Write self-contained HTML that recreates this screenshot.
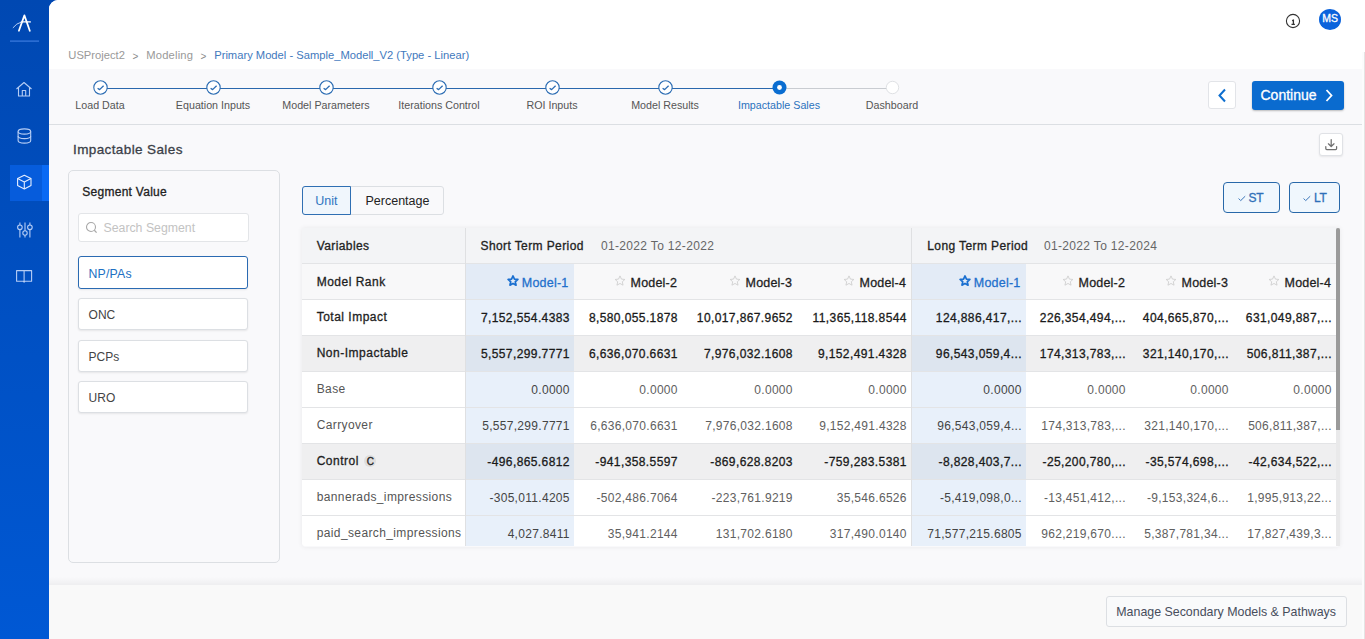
<!DOCTYPE html>
<html><head><meta charset="utf-8"><style>
*{box-sizing:border-box;margin:0;padding:0}
html,body{width:1365px;height:639px;overflow:hidden;background:linear-gradient(to bottom,#0048b2,#0058d4);font-family:"Liberation Sans",sans-serif;color:#222}
.abs{position:absolute}
.t{position:absolute;white-space:nowrap;line-height:1}
.m{-webkit-text-stroke:0.3px currentColor}
</style></head><body>
<svg width="49" height="639" viewBox="0 0 49 639" class="abs" style="left:0;top:0">
<g fill="none" stroke="#fff" stroke-linecap="round">
<path d="M18.9 30.8 L24.4 15.4 L29.8 30.8" stroke-width="1.75" stroke-linejoin="round"/>
<path d="M21.2 21.9 H30.4" stroke-width="1.2"/>
<path d="M13.1 27.6 Q16.3 23.3 21.5 22" stroke-width="0.85" stroke="#d5e4ff"/>
</g>
<rect x="10" y="40.5" width="29" height="1.2" fill="#3c7ddf"/>
<g fill="none" stroke="#b5cdf5" stroke-width="1.1" stroke-linejoin="round">
<path d="M16.5 89 L24 82.5 L31.5 89 M18.5 87.5 V96 H29.5 V87.5"/>
<path d="M22.3 96 V90.5 H25.7 V96"/>
</g>
<g fill="none" stroke="#b5cdf5" stroke-width="1.1">
<ellipse cx="24.4" cy="131.5" rx="6.3" ry="2.6"/>
<path d="M18.1 131.5 V140.5 A6.3 2.6 0 0 0 30.7 140.5 V131.5"/>
<path d="M18.1 136 A6.3 2.6 0 0 0 30.7 136"/>
</g>
<rect x="10" y="165" width="32" height="36" fill="#065cdc"/>
<rect x="42" y="165" width="7" height="36" fill="#0a6af4"/>
<g fill="none" stroke="#e6eeff" stroke-width="1.1" stroke-linejoin="round">
<path d="M24.3 175.2 L31 178.6 V185.6 L24.3 189 L17.6 185.6 V178.6 Z"/>
<path d="M17.6 178.6 L24.3 182 L31 178.6 M24.3 182 V189"/>
</g>
<g fill="none" stroke="#b5cdf5" stroke-width="1.1">
<path d="M19.9 222.6 V237.6 M25 222.6 V237.6 M29.9 222.6 V237.6"/>
<circle cx="19.9" cy="227.3" r="2.3" fill="#004ebe"/>
<circle cx="25" cy="233" r="2.2" fill="#004ebe"/>
<circle cx="29.9" cy="227.3" r="2.3" fill="#004ebe"/>
</g>
<g fill="none" stroke="#b5cdf5" stroke-width="1.1" stroke-linejoin="round">
<path d="M16.6 270.6 H31.6 V281.2 H25.2 L24.1 282.2 L23 281.2 H16.6 Z M24.1 270.6 V281.5"/>
</g>
</svg>
<div class="abs" style="left:49px;top:0px;width:1316px;height:639px;background:#f9f9fb;border-top-left-radius:9px;overflow:hidden"></div>
<div class="abs" style="left:49px;top:0px;width:1316px;height:69px;background:#fff;border-top-left-radius:9px"></div>
<div class="abs" style="left:49px;top:69px;width:1316px;height:56px;background:#f9f9fb;border-bottom:1px solid #dcdfe3"></div>
<div class="t" style="left:68.30px;top:49.88px;font-size:11.2px;color:#999;letter-spacing:0px;">USProject2</div>
<div class="t" style="left:132.60px;top:51.88px;font-size:10px;color:#8a8a8a;letter-spacing:0px;">&gt;</div>
<div class="t" style="left:146.20px;top:49.88px;font-size:11.2px;color:#999;letter-spacing:0.2px;">Modeling</div>
<div class="t" style="left:200.50px;top:51.88px;font-size:10px;color:#8a8a8a;letter-spacing:0px;">&gt;</div>
<div class="t" style="left:214.20px;top:49.88px;font-size:11.2px;color:#4279bd;letter-spacing:0px;">Primary Model - Sample_Modell_V2 (Type - Linear)</div>
<div class="abs" style="left:100px;top:88px;width:679px;height:1.2px;background:#2a68ad"></div>
<div class="abs" style="left:779px;top:88px;width:113px;height:1.3px;background:#c9ccd1"></div>
<svg class="abs" style="left:92.5px;top:80px" width="15" height="15" viewBox="0 0 15 15"><circle cx="7.5" cy="7.5" r="6.7" fill="#fff" stroke="#2b6cb3" stroke-width="1.1"/><path d="M4.6 8.2 L6.6 9.6 L10.6 5.8" fill="none" stroke="#2b6cb3" stroke-width="1.3" stroke-linejoin="round"/></svg>
<div class="t" style="left:0.00px;width:200px;text-align:center;top:99.98px;font-size:10.7px;color:#555;letter-spacing:0px">Load Data</div>
<svg class="abs" style="left:205.5px;top:80px" width="15" height="15" viewBox="0 0 15 15"><circle cx="7.5" cy="7.5" r="6.7" fill="#fff" stroke="#2b6cb3" stroke-width="1.1"/><path d="M4.6 8.2 L6.6 9.6 L10.6 5.8" fill="none" stroke="#2b6cb3" stroke-width="1.3" stroke-linejoin="round"/></svg>
<div class="t" style="left:113.00px;width:200px;text-align:center;top:99.98px;font-size:10.7px;color:#555;letter-spacing:0px">Equation Inputs</div>
<svg class="abs" style="left:318.5px;top:80px" width="15" height="15" viewBox="0 0 15 15"><circle cx="7.5" cy="7.5" r="6.7" fill="#fff" stroke="#2b6cb3" stroke-width="1.1"/><path d="M4.6 8.2 L6.6 9.6 L10.6 5.8" fill="none" stroke="#2b6cb3" stroke-width="1.3" stroke-linejoin="round"/></svg>
<div class="t" style="left:226.00px;width:200px;text-align:center;top:99.98px;font-size:10.7px;color:#555;letter-spacing:0px">Model Parameters</div>
<svg class="abs" style="left:431.5px;top:80px" width="15" height="15" viewBox="0 0 15 15"><circle cx="7.5" cy="7.5" r="6.7" fill="#fff" stroke="#2b6cb3" stroke-width="1.1"/><path d="M4.6 8.2 L6.6 9.6 L10.6 5.8" fill="none" stroke="#2b6cb3" stroke-width="1.3" stroke-linejoin="round"/></svg>
<div class="t" style="left:339.00px;width:200px;text-align:center;top:99.98px;font-size:10.7px;color:#555;letter-spacing:0px">Iterations Control</div>
<svg class="abs" style="left:544.5px;top:80px" width="15" height="15" viewBox="0 0 15 15"><circle cx="7.5" cy="7.5" r="6.7" fill="#fff" stroke="#2b6cb3" stroke-width="1.1"/><path d="M4.6 8.2 L6.6 9.6 L10.6 5.8" fill="none" stroke="#2b6cb3" stroke-width="1.3" stroke-linejoin="round"/></svg>
<div class="t" style="left:452.00px;width:200px;text-align:center;top:99.98px;font-size:10.7px;color:#555;letter-spacing:0px">ROI Inputs</div>
<svg class="abs" style="left:657.5px;top:80px" width="15" height="15" viewBox="0 0 15 15"><circle cx="7.5" cy="7.5" r="6.7" fill="#fff" stroke="#2b6cb3" stroke-width="1.1"/><path d="M4.6 8.2 L6.6 9.6 L10.6 5.8" fill="none" stroke="#2b6cb3" stroke-width="1.3" stroke-linejoin="round"/></svg>
<div class="t" style="left:565.00px;width:200px;text-align:center;top:99.98px;font-size:10.7px;color:#555;letter-spacing:0px">Model Results</div>
<svg class="abs" style="left:771.5px;top:80px" width="15" height="15" viewBox="0 0 15 15"><circle cx="7.5" cy="7.5" r="7" fill="#0a6dd1"/><circle cx="7.5" cy="7.5" r="2.4" fill="#fff"/></svg>
<div class="t" style="left:679.00px;width:200px;text-align:center;top:99.98px;font-size:10.7px;color:#2b72bd;letter-spacing:0px">Impactable Sales</div>
<svg class="abs" style="left:884.5px;top:80px" width="15" height="15" viewBox="0 0 15 15"><circle cx="7.5" cy="7.5" r="6.2" fill="#fff" stroke="#dfe1e4" stroke-width="1"/></svg>
<div class="t" style="left:792.00px;width:200px;text-align:center;top:99.98px;font-size:10.7px;color:#555;letter-spacing:0px">Dashboard</div>
<svg class="abs" style="left:1284px;top:12px" width="18" height="18" viewBox="0 0 18 18"><circle cx="9" cy="9" r="6.6" fill="none" stroke="#333" stroke-width="1.1"/><path d="M8.1 8.6 L9.4 8.2 V12.3 M7.5 12.4 H10.9" fill="none" stroke="#333" stroke-width="1.3"/></svg>
<div class="abs" style="left:1319px;top:9px;width:22px;height:21px;border-radius:50%;background:#0b63dc"></div>
<div class="t m" style="left:1322.30px;top:13.00px;font-size:10.5px;color:#fff;letter-spacing:0px;">MS</div>
<div class="abs" style="left:1208px;top:81px;width:28px;height:28px;border:1px solid #e2e4e8;border-radius:3px;background:#fff"></div>
<svg class="abs" style="left:1208px;top:81px" width="28" height="28" viewBox="0 0 28 28"><path d="M17 8.5 L11.5 14.5 L17 20.5" fill="none" stroke="#0d6ecf" stroke-width="2"/></svg>
<div class="abs" style="left:1252px;top:81px;width:92px;height:29px;border-radius:3px;background:#0a6bcf;box-shadow:0 1px 2px rgba(0,0,0,.25)"></div>
<div class="t m" style="left:1260.50px;top:87.97px;font-size:14px;color:#fff;letter-spacing:0px;">Continue</div>
<svg class="abs" style="left:1320px;top:81px" width="20" height="29" viewBox="0 0 20 29"><path d="M6.5 9 L11.5 14.5 L6.5 20" fill="none" stroke="#fff" stroke-width="1.8"/></svg>
<div class="t m" style="left:73.00px;top:142.90px;font-size:13.5px;color:#3b3f48;letter-spacing:0.39px;">Impactable Sales</div>
<div class="abs" style="left:1319px;top:133px;width:24px;height:23px;border:1px solid #e0e2e6;border-radius:3px;background:#fff;box-shadow:0 1px 2px rgba(0,0,0,.08)"></div>
<svg class="abs" style="left:1319px;top:133px" width="24" height="23" viewBox="0 0 24 23"><path d="M12.2 6.6 V13.4 M9.4 10.8 L12.2 13.5 L15 10.8 M6.8 13.6 V15.6 Q6.8 16.6 7.8 16.6 H16.6 Q17.6 16.6 17.6 15.6 V13.6" fill="none" stroke="#707070" stroke-width="1.25" stroke-linejoin="round" stroke-linecap="round"/></svg>
<div class="abs" style="left:68px;top:170px;width:212px;height:393px;border:1px solid #dcdfe3;border-radius:5px;background:#f9f9fb"></div>
<div class="t m" style="left:82.30px;top:185.97px;font-size:12px;color:#222;letter-spacing:0.27px;">Segment Value</div>
<div class="abs" style="left:78px;top:213px;width:171px;height:29px;border:1px solid #e3e5e8;border-radius:3px;background:#fff"></div>
<svg class="abs" style="left:84px;top:220px" width="16" height="16" viewBox="0 0 16 16"><circle cx="7" cy="7" r="4.5" fill="none" stroke="#a8a8a8" stroke-width="1.1"/><path d="M10.3 10.3 L12.6 12.6" stroke="#a8a8a8" stroke-width="1.3"/></svg>
<div class="t" style="left:103.50px;top:221.92px;font-size:12.3px;color:#c3c3c3;letter-spacing:0px;">Search Segment</div>
<div class="abs" style="left:78px;top:256px;width:170px;height:33px;border:1.5px solid #2a6ab2;border-radius:3px;background:#fff;box-shadow:0 1px 2px rgba(0,0,0,.08)"></div>
<div class="t" style="left:88.50px;top:267.92px;font-size:12.3px;color:#2070c3;letter-spacing:0.2px;">NP/PAs</div>
<div class="abs" style="left:78px;top:298px;width:170px;height:32px;border:1px solid #dcdfe3;border-radius:3px;background:#fff;box-shadow:0 1px 2px rgba(0,0,0,.08)"></div>
<div class="t" style="left:88.50px;top:308.98px;font-size:12px;color:#444;letter-spacing:0.05px;">ONC</div>
<div class="abs" style="left:78px;top:340px;width:170px;height:32px;border:1px solid #dcdfe3;border-radius:3px;background:#fff;box-shadow:0 1px 2px rgba(0,0,0,.08)"></div>
<div class="t" style="left:88.50px;top:350.98px;font-size:12px;color:#444;letter-spacing:0.05px;">PCPs</div>
<div class="abs" style="left:78px;top:381px;width:170px;height:32px;border:1px solid #dcdfe3;border-radius:3px;background:#fff;box-shadow:0 1px 2px rgba(0,0,0,.08)"></div>
<div class="t" style="left:88.50px;top:391.98px;font-size:12px;color:#444;letter-spacing:0.05px;">URO</div>
<div class="abs" style="left:302px;top:186px;width:142px;height:29px;border:1px solid #dcdfe3;border-radius:3px;background:#f9f9fb"></div>
<div class="abs" style="left:302px;top:186px;width:49px;height:29px;border:1.3px solid #2f6fb3;border-radius:3px 0 0 3px;background:#f0f6fc"></div>
<div class="t" style="left:315.30px;top:194.82px;font-size:12.5px;color:#2e74c0;letter-spacing:0px;">Unit</div>
<div class="t" style="left:365.50px;top:194.82px;font-size:12.5px;color:#222;letter-spacing:0px;">Percentage</div>
<div class="abs" style="left:1223px;top:182px;width:57px;height:31px;border:1.3px solid #2868a9;border-radius:4px;background:#f0f7fd"></div>
<div class="abs" style="left:1289px;top:182px;width:51px;height:31px;border:1.3px solid #2868a9;border-radius:4px;background:#f0f7fd"></div>
<svg class="abs" style="left:1237.5px;top:195px" width="8" height="7" viewBox="0 0 8 7"><path d="M0.6 3.5 L2.7 5.6 L7.2 1.2" fill="none" stroke="#3a74b8" stroke-width="1"/></svg>
<svg class="abs" style="left:1302.8px;top:195px" width="8" height="7" viewBox="0 0 8 7"><path d="M0.6 3.5 L2.7 5.6 L7.2 1.2" fill="none" stroke="#3a74b8" stroke-width="1"/></svg>
<div class="t m" style="left:1248.50px;top:191.97px;font-size:12px;color:#2e6fb8;letter-spacing:-0.2px;">ST</div>
<div class="t m" style="left:1314.00px;top:191.97px;font-size:12px;color:#2e6fb8;letter-spacing:-0.2px;">LT</div>
<div class="abs" style="left:302px;top:228px;width:1038px;height:319px;border-radius:0 0 4px 4px;box-shadow:0 0 5px rgba(0,0,0,.07)"></div>
<div class="abs" style="left:302px;top:228px;width:1034px;height:318px;background:#fff;overflow:hidden;border-radius:0 0 0 4px">
<div class="abs" style="left:0px;top:0px;width:1034px;height:35px;background:#f3f4f6"></div>
<div class="abs" style="left:0px;top:35px;width:1034px;height:1px;background:#e3e4e6"></div>
<div class="abs" style="left:0px;top:36px;width:1034px;height:35px;background:#f8f8f9"></div>
<div class="abs" style="left:163px;top:36px;width:109px;height:36px;background:#e3ebf6"></div>
<div class="abs" style="left:609px;top:36px;width:115px;height:36px;background:#e3ebf6"></div>
<div class="abs" style="left:0px;top:71px;width:1034px;height:1px;background:#e3e4e6"></div>
<div class="abs" style="left:0px;top:72px;width:1034px;height:35px;background:#ffffff"></div>
<div class="abs" style="left:163px;top:72px;width:109px;height:36px;background:#e8f0fa"></div>
<div class="abs" style="left:609px;top:72px;width:115px;height:36px;background:#e8f0fa"></div>
<div class="abs" style="left:0px;top:107px;width:1034px;height:1px;background:#e3e4e6"></div>
<div class="abs" style="left:0px;top:108px;width:1034px;height:35px;background:#efeff0"></div>
<div class="abs" style="left:163px;top:108px;width:109px;height:36px;background:#dde5ef"></div>
<div class="abs" style="left:609px;top:108px;width:115px;height:36px;background:#dde5ef"></div>
<div class="abs" style="left:0px;top:143px;width:1034px;height:1px;background:#e3e4e6"></div>
<div class="abs" style="left:0px;top:144px;width:1034px;height:35px;background:#ffffff"></div>
<div class="abs" style="left:163px;top:144px;width:109px;height:36px;background:#e8f0fa"></div>
<div class="abs" style="left:609px;top:144px;width:115px;height:36px;background:#e8f0fa"></div>
<div class="abs" style="left:0px;top:179px;width:1034px;height:1px;background:#e3e4e6"></div>
<div class="abs" style="left:0px;top:180px;width:1034px;height:35px;background:#ffffff"></div>
<div class="abs" style="left:163px;top:180px;width:109px;height:36px;background:#e8f0fa"></div>
<div class="abs" style="left:609px;top:180px;width:115px;height:36px;background:#e8f0fa"></div>
<div class="abs" style="left:0px;top:215px;width:1034px;height:1px;background:#e3e4e6"></div>
<div class="abs" style="left:0px;top:216px;width:1034px;height:35px;background:#efeff0"></div>
<div class="abs" style="left:163px;top:216px;width:109px;height:36px;background:#dde5ef"></div>
<div class="abs" style="left:609px;top:216px;width:115px;height:36px;background:#dde5ef"></div>
<div class="abs" style="left:0px;top:251px;width:1034px;height:1px;background:#e3e4e6"></div>
<div class="abs" style="left:0px;top:252px;width:1034px;height:35px;background:#ffffff"></div>
<div class="abs" style="left:163px;top:252px;width:109px;height:36px;background:#e8f0fa"></div>
<div class="abs" style="left:609px;top:252px;width:115px;height:36px;background:#e8f0fa"></div>
<div class="abs" style="left:0px;top:287px;width:1034px;height:1px;background:#e3e4e6"></div>
<div class="abs" style="left:0px;top:288px;width:1034px;height:35px;background:#ffffff"></div>
<div class="abs" style="left:163px;top:288px;width:109px;height:36px;background:#e8f0fa"></div>
<div class="abs" style="left:609px;top:288px;width:115px;height:36px;background:#e8f0fa"></div>
<div class="abs" style="left:0px;top:323px;width:1034px;height:1px;background:#e3e4e6"></div>
<div class="abs" style="left:163px;top:0px;width:1px;height:318px;background:#dfe0e2"></div>
<div class="abs" style="left:609px;top:0px;width:1px;height:318px;background:#dfe0e2"></div>
</div>
<div class="abs" style="left:1336px;top:228px;width:4px;height:318px;background:#e9e9ea"></div>
<div class="abs" style="left:1336px;top:228px;width:4px;height:202px;background:#9a9a9a;border-radius:2px 2px 0 0"></div>
<div class="t m" style="left:316.70px;top:239.97px;font-size:12px;color:#222;letter-spacing:0.4px;">Variables</div>
<div class="t m" style="left:480.50px;top:239.97px;font-size:12px;color:#222;letter-spacing:0.4px;">Short Term Period</div>
<div class="t" style="left:601.00px;top:239.97px;font-size:12px;color:#666;letter-spacing:0.33px;">01-2022 To 12-2022</div>
<div class="t m" style="left:927.30px;top:239.97px;font-size:12px;color:#222;letter-spacing:0.4px;">Long Term Period</div>
<div class="t" style="left:1044.00px;top:239.97px;font-size:12px;color:#666;letter-spacing:0.33px;">01-2022 To 12-2024</div>
<div class="t m" style="left:316.70px;top:275.98px;font-size:12px;color:#1e1e1e;letter-spacing:0.5px;">Model Rank</div>
<div class="t m" style="right:796.60px;top:276.82px;font-size:12.5px;color:#1f70cc;letter-spacing:0.2px;">Model-1</div>
<svg class="abs" style="left:507.0px;top:274.5px" width="12" height="12" viewBox="0 0 12 12"><path d="M6 0.9 L7.45 4.1 L10.9 4.45 L8.3 6.75 L9.05 10.2 L6 8.45 L2.95 10.2 L3.7 6.75 L1.1 4.45 L4.55 4.1 Z" fill="none" stroke="#1a6fd0" stroke-width="1.7" stroke-linejoin="round"/></svg>
<div class="t m" style="right:687.90px;top:276.82px;font-size:12.5px;color:#1e1e1e;letter-spacing:0.2px;">Model-2</div>
<svg class="abs" style="left:614.2px;top:274.5px" width="12" height="12" viewBox="0 0 12 12"><path d="M6 0.9 L7.45 4.1 L10.9 4.45 L8.3 6.75 L9.05 10.2 L6 8.45 L2.95 10.2 L3.7 6.75 L1.1 4.45 L4.55 4.1 Z" fill="none" stroke="#cfcfcf" stroke-width="0.9" stroke-linejoin="round"/></svg>
<div class="t m" style="right:572.90px;top:276.82px;font-size:12.5px;color:#1e1e1e;letter-spacing:0.2px;">Model-3</div>
<svg class="abs" style="left:729.2px;top:274.5px" width="12" height="12" viewBox="0 0 12 12"><path d="M6 0.9 L7.45 4.1 L10.9 4.45 L8.3 6.75 L9.05 10.2 L6 8.45 L2.95 10.2 L3.7 6.75 L1.1 4.45 L4.55 4.1 Z" fill="none" stroke="#cfcfcf" stroke-width="0.9" stroke-linejoin="round"/></svg>
<div class="t m" style="right:458.90px;top:276.82px;font-size:12.5px;color:#1e1e1e;letter-spacing:0.2px;">Model-4</div>
<svg class="abs" style="left:843.2px;top:274.5px" width="12" height="12" viewBox="0 0 12 12"><path d="M6 0.9 L7.45 4.1 L10.9 4.45 L8.3 6.75 L9.05 10.2 L6 8.45 L2.95 10.2 L3.7 6.75 L1.1 4.45 L4.55 4.1 Z" fill="none" stroke="#cfcfcf" stroke-width="0.9" stroke-linejoin="round"/></svg>
<div class="t m" style="right:344.60px;top:276.82px;font-size:12.5px;color:#1f70cc;letter-spacing:0.2px;">Model-1</div>
<svg class="abs" style="left:959.0px;top:274.5px" width="12" height="12" viewBox="0 0 12 12"><path d="M6 0.9 L7.45 4.1 L10.9 4.45 L8.3 6.75 L9.05 10.2 L6 8.45 L2.95 10.2 L3.7 6.75 L1.1 4.45 L4.55 4.1 Z" fill="none" stroke="#1a6fd0" stroke-width="1.7" stroke-linejoin="round"/></svg>
<div class="t m" style="right:239.90px;top:276.82px;font-size:12.5px;color:#1e1e1e;letter-spacing:0.2px;">Model-2</div>
<svg class="abs" style="left:1062.2px;top:274.5px" width="12" height="12" viewBox="0 0 12 12"><path d="M6 0.9 L7.45 4.1 L10.9 4.45 L8.3 6.75 L9.05 10.2 L6 8.45 L2.95 10.2 L3.7 6.75 L1.1 4.45 L4.55 4.1 Z" fill="none" stroke="#cfcfcf" stroke-width="0.9" stroke-linejoin="round"/></svg>
<div class="t m" style="right:136.90px;top:276.82px;font-size:12.5px;color:#1e1e1e;letter-spacing:0.2px;">Model-3</div>
<svg class="abs" style="left:1165.2px;top:274.5px" width="12" height="12" viewBox="0 0 12 12"><path d="M6 0.9 L7.45 4.1 L10.9 4.45 L8.3 6.75 L9.05 10.2 L6 8.45 L2.95 10.2 L3.7 6.75 L1.1 4.45 L4.55 4.1 Z" fill="none" stroke="#cfcfcf" stroke-width="0.9" stroke-linejoin="round"/></svg>
<div class="t m" style="right:33.90px;top:276.82px;font-size:12.5px;color:#1e1e1e;letter-spacing:0.2px;">Model-4</div>
<svg class="abs" style="left:1268.2px;top:274.5px" width="12" height="12" viewBox="0 0 12 12"><path d="M6 0.9 L7.45 4.1 L10.9 4.45 L8.3 6.75 L9.05 10.2 L6 8.45 L2.95 10.2 L3.7 6.75 L1.1 4.45 L4.55 4.1 Z" fill="none" stroke="#cfcfcf" stroke-width="0.9" stroke-linejoin="round"/></svg>
<div class="t m" style="left:316.70px;top:310.98px;font-size:12px;color:#1e1e1e;letter-spacing:0.5px;">Total Impact</div>
<div class="t m" style="right:795.10px;top:311.98px;font-size:12px;color:#1a1a1a;letter-spacing:0.4px;">7,152,554.4383</div>
<div class="t m" style="right:687.10px;top:311.98px;font-size:12px;color:#1a1a1a;letter-spacing:0.4px;">8,580,055.1878</div>
<div class="t m" style="right:572.10px;top:311.98px;font-size:12px;color:#1a1a1a;letter-spacing:0.4px;">10,017,867.9652</div>
<div class="t m" style="right:458.10px;top:311.98px;font-size:12px;color:#1a1a1a;letter-spacing:0.4px;">11,365,118.8544</div>
<div class="t m" style="right:343.10px;top:311.98px;font-size:12px;color:#1a1a1a;letter-spacing:0.4px;">124,886,417,...</div>
<div class="t m" style="right:239.10px;top:311.98px;font-size:12px;color:#1a1a1a;letter-spacing:0.4px;">226,354,494,...</div>
<div class="t m" style="right:136.10px;top:311.98px;font-size:12px;color:#1a1a1a;letter-spacing:0.4px;">404,665,870,...</div>
<div class="t m" style="right:33.10px;top:311.98px;font-size:12px;color:#1a1a1a;letter-spacing:0.4px;">631,049,887,...</div>
<div class="t m" style="left:316.70px;top:346.98px;font-size:12px;color:#1e1e1e;letter-spacing:0.5px;">Non-Impactable</div>
<div class="t m" style="right:795.10px;top:347.98px;font-size:12px;color:#1a1a1a;letter-spacing:0.4px;">5,557,299.7771</div>
<div class="t m" style="right:687.10px;top:347.98px;font-size:12px;color:#1a1a1a;letter-spacing:0.4px;">6,636,070.6631</div>
<div class="t m" style="right:572.10px;top:347.98px;font-size:12px;color:#1a1a1a;letter-spacing:0.4px;">7,976,032.1608</div>
<div class="t m" style="right:458.10px;top:347.98px;font-size:12px;color:#1a1a1a;letter-spacing:0.4px;">9,152,491.4328</div>
<div class="t m" style="right:343.10px;top:347.98px;font-size:12px;color:#1a1a1a;letter-spacing:0.4px;">96,543,059,4...</div>
<div class="t m" style="right:239.10px;top:347.98px;font-size:12px;color:#1a1a1a;letter-spacing:0.4px;">174,313,783,...</div>
<div class="t m" style="right:136.10px;top:347.98px;font-size:12px;color:#1a1a1a;letter-spacing:0.4px;">321,140,170,...</div>
<div class="t m" style="right:33.10px;top:347.98px;font-size:12px;color:#1a1a1a;letter-spacing:0.4px;">506,811,387,...</div>
<div class="t" style="left:316.70px;top:382.98px;font-size:12px;color:#555;letter-spacing:0.38px;">Base</div>
<div class="t" style="right:795.20px;top:383.98px;font-size:12px;color:#444;letter-spacing:0.3px;">0.0000</div>
<div class="t" style="right:687.20px;top:383.98px;font-size:12px;color:#606060;letter-spacing:0.3px;">0.0000</div>
<div class="t" style="right:572.20px;top:383.98px;font-size:12px;color:#606060;letter-spacing:0.3px;">0.0000</div>
<div class="t" style="right:458.20px;top:383.98px;font-size:12px;color:#606060;letter-spacing:0.3px;">0.0000</div>
<div class="t" style="right:343.20px;top:383.98px;font-size:12px;color:#444;letter-spacing:0.3px;">0.0000</div>
<div class="t" style="right:239.20px;top:383.98px;font-size:12px;color:#606060;letter-spacing:0.3px;">0.0000</div>
<div class="t" style="right:136.20px;top:383.98px;font-size:12px;color:#606060;letter-spacing:0.3px;">0.0000</div>
<div class="t" style="right:33.20px;top:383.98px;font-size:12px;color:#606060;letter-spacing:0.3px;">0.0000</div>
<div class="t" style="left:316.70px;top:418.98px;font-size:12px;color:#555;letter-spacing:0.38px;">Carryover</div>
<div class="t" style="right:795.20px;top:419.98px;font-size:12px;color:#444;letter-spacing:0.3px;">5,557,299.7771</div>
<div class="t" style="right:687.20px;top:419.98px;font-size:12px;color:#606060;letter-spacing:0.3px;">6,636,070.6631</div>
<div class="t" style="right:572.20px;top:419.98px;font-size:12px;color:#606060;letter-spacing:0.3px;">7,976,032.1608</div>
<div class="t" style="right:458.20px;top:419.98px;font-size:12px;color:#606060;letter-spacing:0.3px;">9,152,491.4328</div>
<div class="t" style="right:343.20px;top:419.98px;font-size:12px;color:#444;letter-spacing:0.3px;">96,543,059,4...</div>
<div class="t" style="right:239.20px;top:419.98px;font-size:12px;color:#606060;letter-spacing:0.3px;">174,313,783,...</div>
<div class="t" style="right:136.20px;top:419.98px;font-size:12px;color:#606060;letter-spacing:0.3px;">321,140,170,...</div>
<div class="t" style="right:33.20px;top:419.98px;font-size:12px;color:#606060;letter-spacing:0.3px;">506,811,387,...</div>
<div class="t m" style="left:316.70px;top:454.98px;font-size:12px;color:#1e1e1e;letter-spacing:0.5px;">Control</div>
<div class="abs" style="left:364.3px;top:455px;width:12px;height:12px;border-radius:50%;background:#dedede"></div>
<div class="t m" style="left:366.80px;top:456.88px;font-size:10px;color:#222;letter-spacing:0px;">C</div>
<div class="t m" style="right:795.10px;top:455.98px;font-size:12px;color:#1a1a1a;letter-spacing:0.4px;">-496,865.6812</div>
<div class="t m" style="right:687.10px;top:455.98px;font-size:12px;color:#1a1a1a;letter-spacing:0.4px;">-941,358.5597</div>
<div class="t m" style="right:572.10px;top:455.98px;font-size:12px;color:#1a1a1a;letter-spacing:0.4px;">-869,628.8203</div>
<div class="t m" style="right:458.10px;top:455.98px;font-size:12px;color:#1a1a1a;letter-spacing:0.4px;">-759,283.5381</div>
<div class="t m" style="right:343.10px;top:455.98px;font-size:12px;color:#1a1a1a;letter-spacing:0.4px;">-8,828,403,7...</div>
<div class="t m" style="right:239.10px;top:455.98px;font-size:12px;color:#1a1a1a;letter-spacing:0.4px;">-25,200,780,...</div>
<div class="t m" style="right:136.10px;top:455.98px;font-size:12px;color:#1a1a1a;letter-spacing:0.4px;">-35,574,698,...</div>
<div class="t m" style="right:33.10px;top:455.98px;font-size:12px;color:#1a1a1a;letter-spacing:0.4px;">-42,634,522,...</div>
<div class="t" style="left:316.70px;top:490.98px;font-size:12px;color:#555;letter-spacing:0.38px;">bannerads_impressions</div>
<div class="t" style="right:795.20px;top:491.98px;font-size:12px;color:#444;letter-spacing:0.3px;">-305,011.4205</div>
<div class="t" style="right:687.20px;top:491.98px;font-size:12px;color:#606060;letter-spacing:0.3px;">-502,486.7064</div>
<div class="t" style="right:572.20px;top:491.98px;font-size:12px;color:#606060;letter-spacing:0.3px;">-223,761.9219</div>
<div class="t" style="right:458.20px;top:491.98px;font-size:12px;color:#606060;letter-spacing:0.3px;">35,546.6526</div>
<div class="t" style="right:343.20px;top:491.98px;font-size:12px;color:#444;letter-spacing:0.3px;">-5,419,098,0...</div>
<div class="t" style="right:239.20px;top:491.98px;font-size:12px;color:#606060;letter-spacing:0.3px;">-13,451,412,...</div>
<div class="t" style="right:136.20px;top:491.98px;font-size:12px;color:#606060;letter-spacing:0.3px;">-9,153,324,6...</div>
<div class="t" style="right:33.20px;top:491.98px;font-size:12px;color:#606060;letter-spacing:0.3px;">1,995,913,22...</div>
<div class="t" style="left:316.70px;top:526.98px;font-size:12px;color:#555;letter-spacing:0.38px;">paid_search_impressions</div>
<div class="t" style="right:795.20px;top:527.98px;font-size:12px;color:#444;letter-spacing:0.3px;">4,027.8411</div>
<div class="t" style="right:687.20px;top:527.98px;font-size:12px;color:#606060;letter-spacing:0.3px;">35,941.2144</div>
<div class="t" style="right:572.20px;top:527.98px;font-size:12px;color:#606060;letter-spacing:0.3px;">131,702.6180</div>
<div class="t" style="right:458.20px;top:527.98px;font-size:12px;color:#606060;letter-spacing:0.3px;">317,490.0140</div>
<div class="t" style="right:343.20px;top:527.98px;font-size:12px;color:#444;letter-spacing:0.3px;">71,577,215.6805</div>
<div class="t" style="right:239.20px;top:527.98px;font-size:12px;color:#606060;letter-spacing:0.3px;">962,219,670....</div>
<div class="t" style="right:136.20px;top:527.98px;font-size:12px;color:#606060;letter-spacing:0.3px;">5,387,781,34...</div>
<div class="t" style="right:33.20px;top:527.98px;font-size:12px;color:#606060;letter-spacing:0.3px;">17,827,439,3...</div>
<div class="abs" style="left:49px;top:577px;width:1316px;height:8px;background:linear-gradient(to bottom,rgba(0,0,0,0),rgba(0,0,0,.045))"></div>
<div class="abs" style="left:49px;top:585px;width:1316px;height:54px;background:#f9f9f9"></div>
<div class="abs" style="left:1106px;top:596px;width:241px;height:31px;border:1px solid #dcdfe3;border-radius:3px;background:#f9fafb"></div>
<div class="t" style="left:1116.30px;top:605.86px;font-size:12.4px;color:#474d5c;letter-spacing:0px;">Manage Secondary Models &amp; Pathways</div>
<div class="abs" style="left:1362px;top:52px;width:2px;height:587px;background:#fcfcfd"></div>
<div class="abs" style="left:1364px;top:52px;width:1px;height:587px;background:#e4e4e4"></div>
</body></html>
